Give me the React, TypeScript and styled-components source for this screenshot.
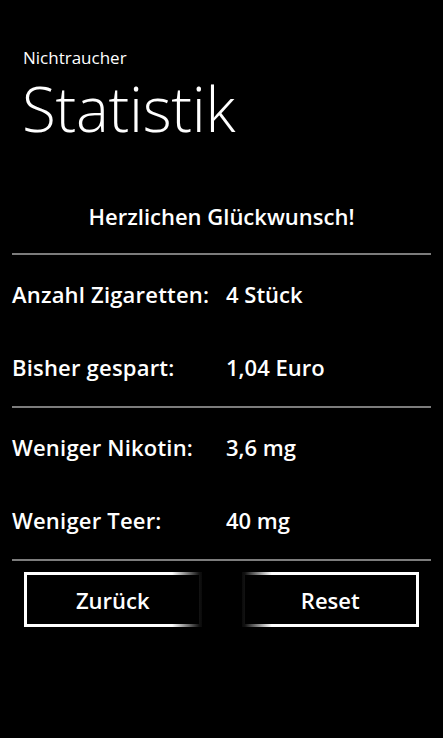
import React from 'react';
import styled, { createGlobalStyle } from 'styled-components';

const GlobalStyle = createGlobalStyle`
  html, body {
    margin: 0;
    padding: 0;
    background: #000;
  }
  body {
    font-family: "Open Sans", "Noto Sans", sans-serif;
    color: #fff;
  }
`;

const Page = styled.div`
  width: 443px;
  height: 738px;
  background: #000;
  overflow: hidden;
`;

const Header = styled.header`
  padding: 50px 0 0 22px;
`;

const AppName = styled.div`
  font-size: 17px;
  line-height: 16px;
  padding-left: 1px;
`;

const Title = styled.h1`
  margin: 0;
  font-size: 62px;
  font-weight: 300;
  line-height: 84px;
  letter-spacing: -0.3px;
`;

const Content = styled.main`
  padding: 51px 12px 0;
`;

const Congrats = styled.div`
  text-align: center;
  font-size: 22px;
  font-weight: 600;
  line-height: 30px;
  margin-bottom: 22px;
`;

const Divider = styled.div`
  height: 2px;
  background: #7c7c7c;
`;

const StatGroup = styled.div`
  display: grid;
  grid-template-columns: 214px 1fr;
  row-gap: 43px;
  padding: 24px 0;
  font-size: 22px;
  font-weight: 600;
  line-height: 30px;
`;

const Label = styled.div`
  white-space: nowrap;
  letter-spacing: 0.2px;
`;

const Value = styled.div`
  white-space: nowrap;
`;

const Buttons = styled.div`
  display: flex;
  gap: 40px;
  padding: 11px 24px 0;
`;

const Button = styled.button<{ $fade: 'left' | 'right' }>`
  flex: 1;
  height: 55px;
  padding: 0;
  background: #000;
  color: #fff;
  font-family: inherit;
  font-size: 22px;
  font-weight: 600;
  border: 3px solid transparent;
  border-image: linear-gradient(
      ${(p) => (p.$fade === 'right' ? 'to right' : 'to left')},
      #fff 0%,
      #fff 84%,
      #0a0a0a 100%
    )
    1;
  cursor: pointer;
`;

const stats = [
  [
    ['Anzahl Zigaretten:', '4 Stück'],
    ['Bisher gespart:', '1,04 Euro'],
  ],
  [
    ['Weniger Nikotin:', '3,6 mg'],
    ['Weniger Teer:', '40 mg'],
  ],
];

export default function App() {
  return (
    <Page>
      <GlobalStyle />
      <Header>
        <AppName>Nichtraucher</AppName>
        <Title>Statistik</Title>
      </Header>
      <Content>
        <Congrats>Herzlichen Glückwunsch!</Congrats>
        {stats.map((group, i) => (
          <React.Fragment key={i}>
            <Divider />
            <StatGroup>
              {group.map(([label, value]) => (
                <React.Fragment key={label}>
                  <Label>{label}</Label>
                  <Value>{value}</Value>
                </React.Fragment>
              ))}
            </StatGroup>
          </React.Fragment>
        ))}
        <Divider />
      </Content>
      <Buttons>
        <Button $fade="right">Zurück</Button>
        <Button $fade="left">Reset</Button>
      </Buttons>
    </Page>
  );
}
